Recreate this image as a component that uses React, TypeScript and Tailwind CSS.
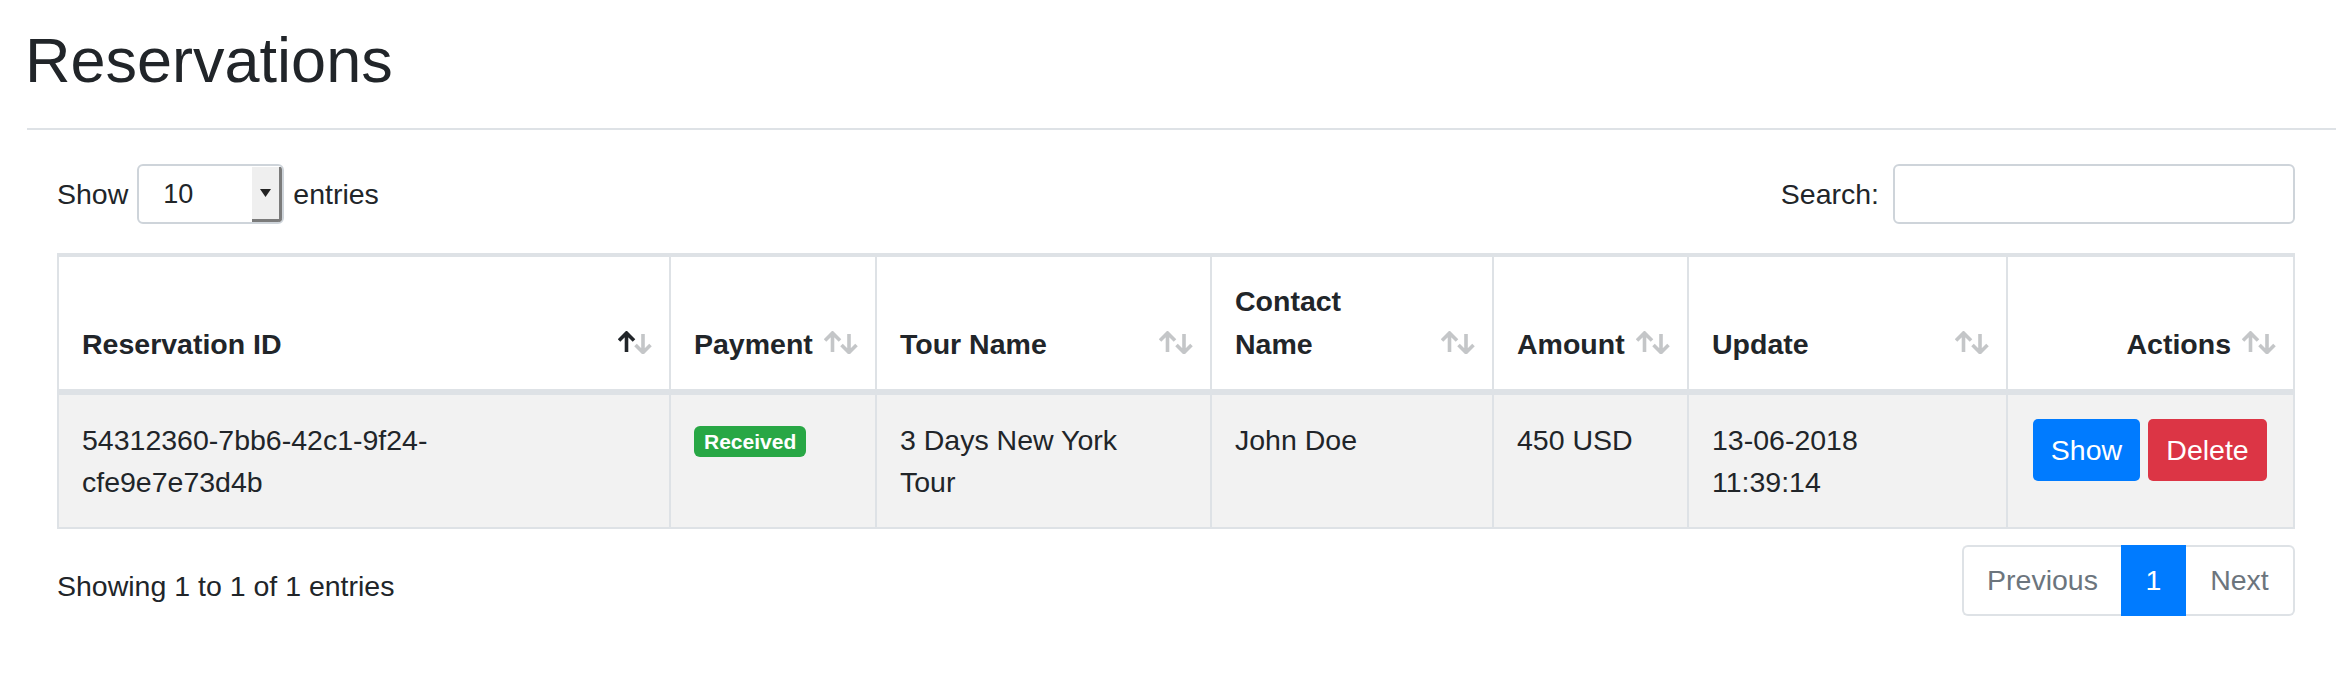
import React from "react";

function SortIcon({ active = false }: { active?: boolean }) {
  const dim = "#c4c6c8";
  return (
    <svg width="34" height="23" viewBox="0 0 34 23" className="mb-[12px] shrink-0">
      <path d="M25 3v19M17.5 14l7.5 7.5 7.5-7.5" stroke={dim} strokeWidth="3.6" fill="none" />
      <path d="M8.5 21V2M1 9.5L8.5 2 16 9.5" stroke={active ? "#212529" : dim} strokeWidth="3.6" fill="none" />
    </svg>
  );
}

function HeadCell({ children, active, right }: { children: React.ReactNode; active?: boolean; right?: boolean }) {
  return (
    <th className="h-[138px] border-r-2 border-b-[6px] border-[#dee2e6] pl-[23px] pr-[17px] pb-[23px] align-bottom text-left font-bold">
      <div className={right ? "flex items-end justify-end gap-[11px]" : "flex items-end justify-between gap-[11px]"}>
        <span className="leading-[43px]">{children}</span>
        <SortIcon active={active} />
      </div>
    </th>
  );
}

const tdBase = "h-[132px] border-r-2 border-[#dee2e6] bg-[#f2f2f2] pl-[23px] pr-[20px] align-top";

export default function App() {
  return (
    <div className="w-[2336px] h-[686px] overflow-hidden bg-white pl-[27px] font-['Liberation_Sans',Arial,sans-serif] text-[28.5px] text-[#212529]">
      <h1 className="-ml-[2px] pt-[22px] text-[63px] font-medium leading-[76px]">Reservations</h1>
      <div className="mt-[30px] h-[2px] bg-[#dee2e6]" />

      <div className="ml-[30px] w-[2238px]">
        {/* Barra superior: longitud y búsqueda */}
        <div className="mt-[34px] flex h-[60px] items-center justify-between">
          <div className="flex items-center gap-[9px]">
            <span>Show</span>
            <div className="flex h-[60px] w-[147px] overflow-hidden rounded-[6px] border-2 border-[#ced4da] bg-white">
              <span className="flex-1 pl-[24px] text-[27px] leading-[56px]">10</span>
              <span className="mt-[1px] flex w-[30px] items-center justify-center border-r-[3px] border-b-[3px] border-[#7b7b7b] bg-[#efefef]">
                <svg width="11" height="8" viewBox="0 0 11 8">
                  <path d="M0 0h11L5.5 8z" fill="#222" />
                </svg>
              </span>
            </div>
            <span>entries</span>
          </div>
          <div className="flex items-center gap-[14px]">
            <span>Search:</span>
            <input
              type="text"
              className="h-[60px] w-[402px] rounded-[6px] border-2 border-[#ced4da] bg-white px-[18px] outline-none"
            />
          </div>
        </div>

        {/* Tabla */}
        <table className="mt-[29px] w-[2238px] table-fixed border-separate border-spacing-0 border-t-4 border-l-2 border-b-2 border-[#dee2e6]">
          <colgroup>
            <col className="w-[612px]" />
            <col className="w-[206px]" />
            <col className="w-[335px]" />
            <col className="w-[282px]" />
            <col className="w-[195px]" />
            <col className="w-[319px]" />
            <col className="w-[287px]" />
          </colgroup>
          <thead>
            <tr>
              <HeadCell active>Reservation ID</HeadCell>
              <HeadCell>Payment</HeadCell>
              <HeadCell>Tour Name</HeadCell>
              <HeadCell>
                Contact
                <br />
                Name
              </HeadCell>
              <HeadCell>Amount</HeadCell>
              <HeadCell>Update</HeadCell>
              <HeadCell right>Actions</HeadCell>
            </tr>
          </thead>
          <tbody>
            <tr className="leading-[42px]">
              <td className={`${tdBase} pt-[24px]`}>
                54312360-7bb6-42c1-9f24-
                <br />
                cfe9e7e73d4b
              </td>
              <td className={`${tdBase} pt-[24px]`}>
                <div className="flex h-[42px] items-center pt-[3px]">
                  <span className="rounded-[6px] bg-[#28a745] px-[10px] text-[21px] font-bold leading-[31px] text-white">
                    Received
                  </span>
                </div>
              </td>
              <td className={`${tdBase} pt-[24px]`}>
                3 Days New York
                <br />
                Tour
              </td>
              <td className={`${tdBase} pt-[24px]`}>John Doe</td>
              <td className={`${tdBase} pt-[24px]`}>450 USD</td>
              <td className={`${tdBase} pt-[24px]`}>
                13-06-2018
                <br />
                11:39:14
              </td>
              <td className={`${tdBase} pt-[24px] pl-[25px]`}>
                <div className="flex gap-[8px]">
                  <button className="h-[62px] w-[107px] rounded-[5px] bg-[#007bff] text-white">Show</button>
                  <button className="h-[62px] w-[119px] rounded-[5px] bg-[#dc3545] text-white">Delete</button>
                </div>
              </td>
            </tr>
          </tbody>
        </table>

        {/* Pie: info y paginación */}
        <div className="mt-[16px] flex items-start justify-between">
          <div className="pt-[20px] leading-[42px]">Showing 1 to 1 of 1 entries</div>
          <div className="flex h-[71px] text-[#6c757d]">
            <span className="flex w-[159px] items-center justify-center rounded-l-[6px] border-y-2 border-l-2 border-[#dee2e6]">
              Previous
            </span>
            <span className="flex w-[65px] items-center justify-center bg-[#007bff] text-white">1</span>
            <span className="flex w-[109px] items-center justify-center rounded-r-[6px] border-y-2 border-r-2 border-[#dee2e6]">
              Next
            </span>
          </div>
        </div>
      </div>
    </div>
  );
}
